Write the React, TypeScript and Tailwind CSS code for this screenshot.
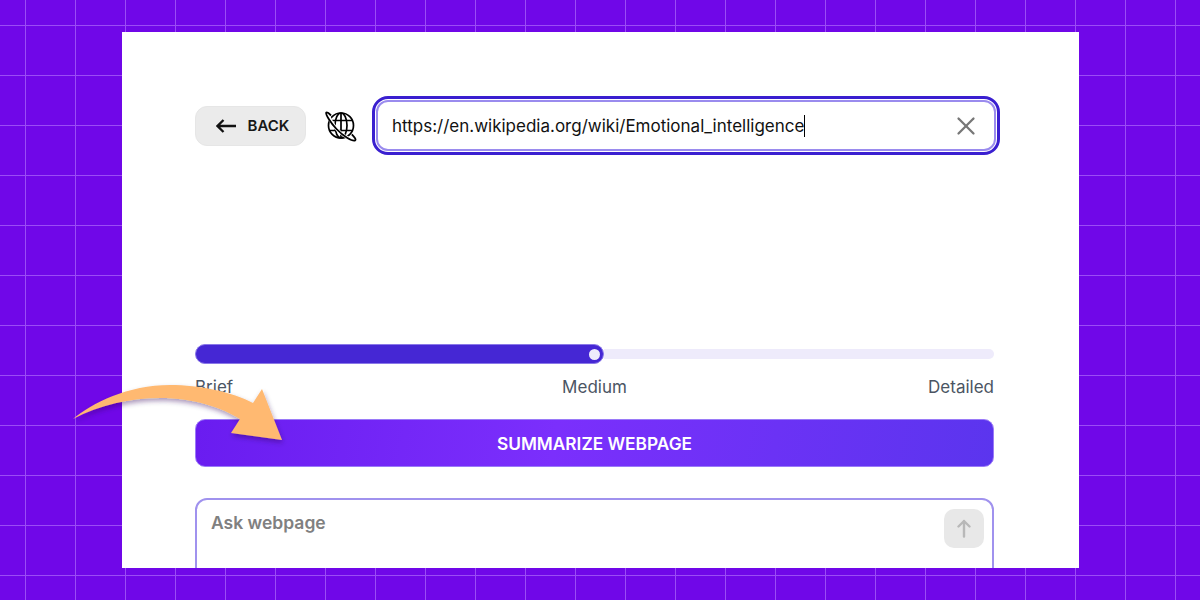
import { X } from "lucide-react";

function Globe() {
  return (
    <svg width="32" height="32" viewBox="0 0 32 32" fill="none" stroke="#000" strokeWidth="1.7" className="shrink-0">
      <circle cx="16" cy="15.5" r="12.5" />
      <ellipse cx="16" cy="15.5" rx="6" ry="12.5" />
      <path d="M16 3v25M4.5 10.5h23M4.5 20.5h23" />
      <path d="M3 5C6 12 12 21 19 25.5c5 3 9 5 11 4.5" stroke="#fff" strokeWidth="3.2" />
      <path d="M6 5.5C3.5 3 1.8 1.8 1.2 2.6 0.4 4 5 12 11.5 19c7 7.5 16 12.6 18.6 11.4 1.3-.8-.8-3.4-3.3-6" strokeWidth="1.8" />
    </svg>
  );
}

function Arrow() {
  return (
    <svg className="absolute left-[70px] top-[380px] overflow-visible" width="220" height="65" viewBox="70 380 220 65" fill="none">
      <defs>
        <filter id="arrowShadow" x="-20%" y="-20%" width="140%" height="150%">
          <feDropShadow dx="1" dy="3" stdDeviation="2.5" floodColor="#30105a" floodOpacity="0.4" />
        </filter>
      </defs>
      <path
        d="M73 419 C92 403 128 385 170 385 C200 385 232 392 253 403 L262 389 L282 440 L231 433 L240 419 C222 408 195 398 160 398 C130 398 100 405 73 419 Z"
        fill="#ffb971"
        filter="url(#arrowShadow)"
      />
    </svg>
  );
}

export default function App() {
  return (
    <div className="relative h-[600px] w-[1200px] overflow-hidden bg-[#7007e8] bg-[linear-gradient(to_right,#9b4cf5_1px,transparent_1px),linear-gradient(to_bottom,#9b4cf5_1px,transparent_1px)] bg-[size:50px_50px] bg-[position:25px_25px] pl-[122px] pt-[32px] font-['Inter',sans-serif]">
      <main className="h-[536px] w-[957px] overflow-hidden bg-white pl-[73px] pt-[64px]">
        <div className="flex items-center">
          <button className="flex h-[40px] w-[111px] shrink-0 items-center justify-center gap-[12px] rounded-xl border border-[#e6e6e6] bg-[#ebebeb] pl-[4px] text-[15px] font-semibold text-[#171717]">
            <svg width="20" height="14" viewBox="0 0 20 14" fill="none" stroke="#111" strokeWidth="2.3">
              <path d="M20 7H1.5M7.5 1 1.5 7l6 6" />
            </svg>
            <span className="pt-[1px]">BACK</span>
          </button>
          <div className="ml-[19px] mr-[15px] flex">
            <Globe />
          </div>
          <div className="h-[59px] w-[628px] shrink-0 rounded-[16px] border-[3px] border-[#3a1fd0] p-[1px]">
            <div className="flex h-full items-center justify-between rounded-[12px] border-2 border-[#9a8bee] pl-[14px] pr-[13px]">
              <span className="border-r border-black text-[17px] leading-[22px] text-[#111]">https://en.wikipedia.org/wiki/Emotional_intelligence</span>
              <X size={30} strokeWidth={1.8} className="text-[#777]" />
            </div>
          </div>
        </div>

        <div className="mt-[189px] flex h-[20px] w-[799px] items-center">
          <div className="relative h-[20px] w-[409px] rounded-full border border-[#8a78e8] bg-[#4527d4]">
            <div className="absolute right-[3px] top-[3.5px] h-[11px] w-[11px] rounded-full bg-[#eeebfb]" />
          </div>
          <div className="h-[10px] flex-1 rounded-r-full bg-[#eeebfb]" />
        </div>

        <div className="mt-[13px] grid w-[799px] grid-cols-3 text-[17px] leading-[20px] text-[#4b5563]">
          <span>Brief</span>
          <span className="text-center">Medium</span>
          <span className="text-right">Detailed</span>
        </div>

        <button className="mt-[22px] flex h-[48px] w-[799px] items-center justify-center rounded-[10px] border border-[#9a7af8] bg-[linear-gradient(100deg,#6a1cf0_0%,#7b2ffc_45%,#5b35ee_100%)] pt-[1px] text-[17.3px] font-semibold text-white">
          SUMMARIZE WEBPAGE
        </button>

        <div className="mt-[31px] flex h-[100px] w-[799px] items-start justify-between rounded-[12px] border-2 border-[#a092ee] pl-[14px] pr-[8px] pt-[9px]">
          <span className="pt-[4px] text-[17.5px] font-semibold leading-[20px] text-[#808080]">Ask webpage</span>
          <div className="flex h-[39px] w-[40px] items-center justify-center rounded-[10px] bg-[#e8e8e8]">
            <svg width="14" height="19" viewBox="0 0 14 19" fill="none" stroke="#b8b8b8" strokeWidth="2.4" strokeLinecap="round" strokeLinejoin="round">
              <path d="M7 17.5V2M1.5 7.5 7 2l5.5 5.5" />
            </svg>
          </div>
        </div>
      </main>
      <Arrow />
    </div>
  );
}
